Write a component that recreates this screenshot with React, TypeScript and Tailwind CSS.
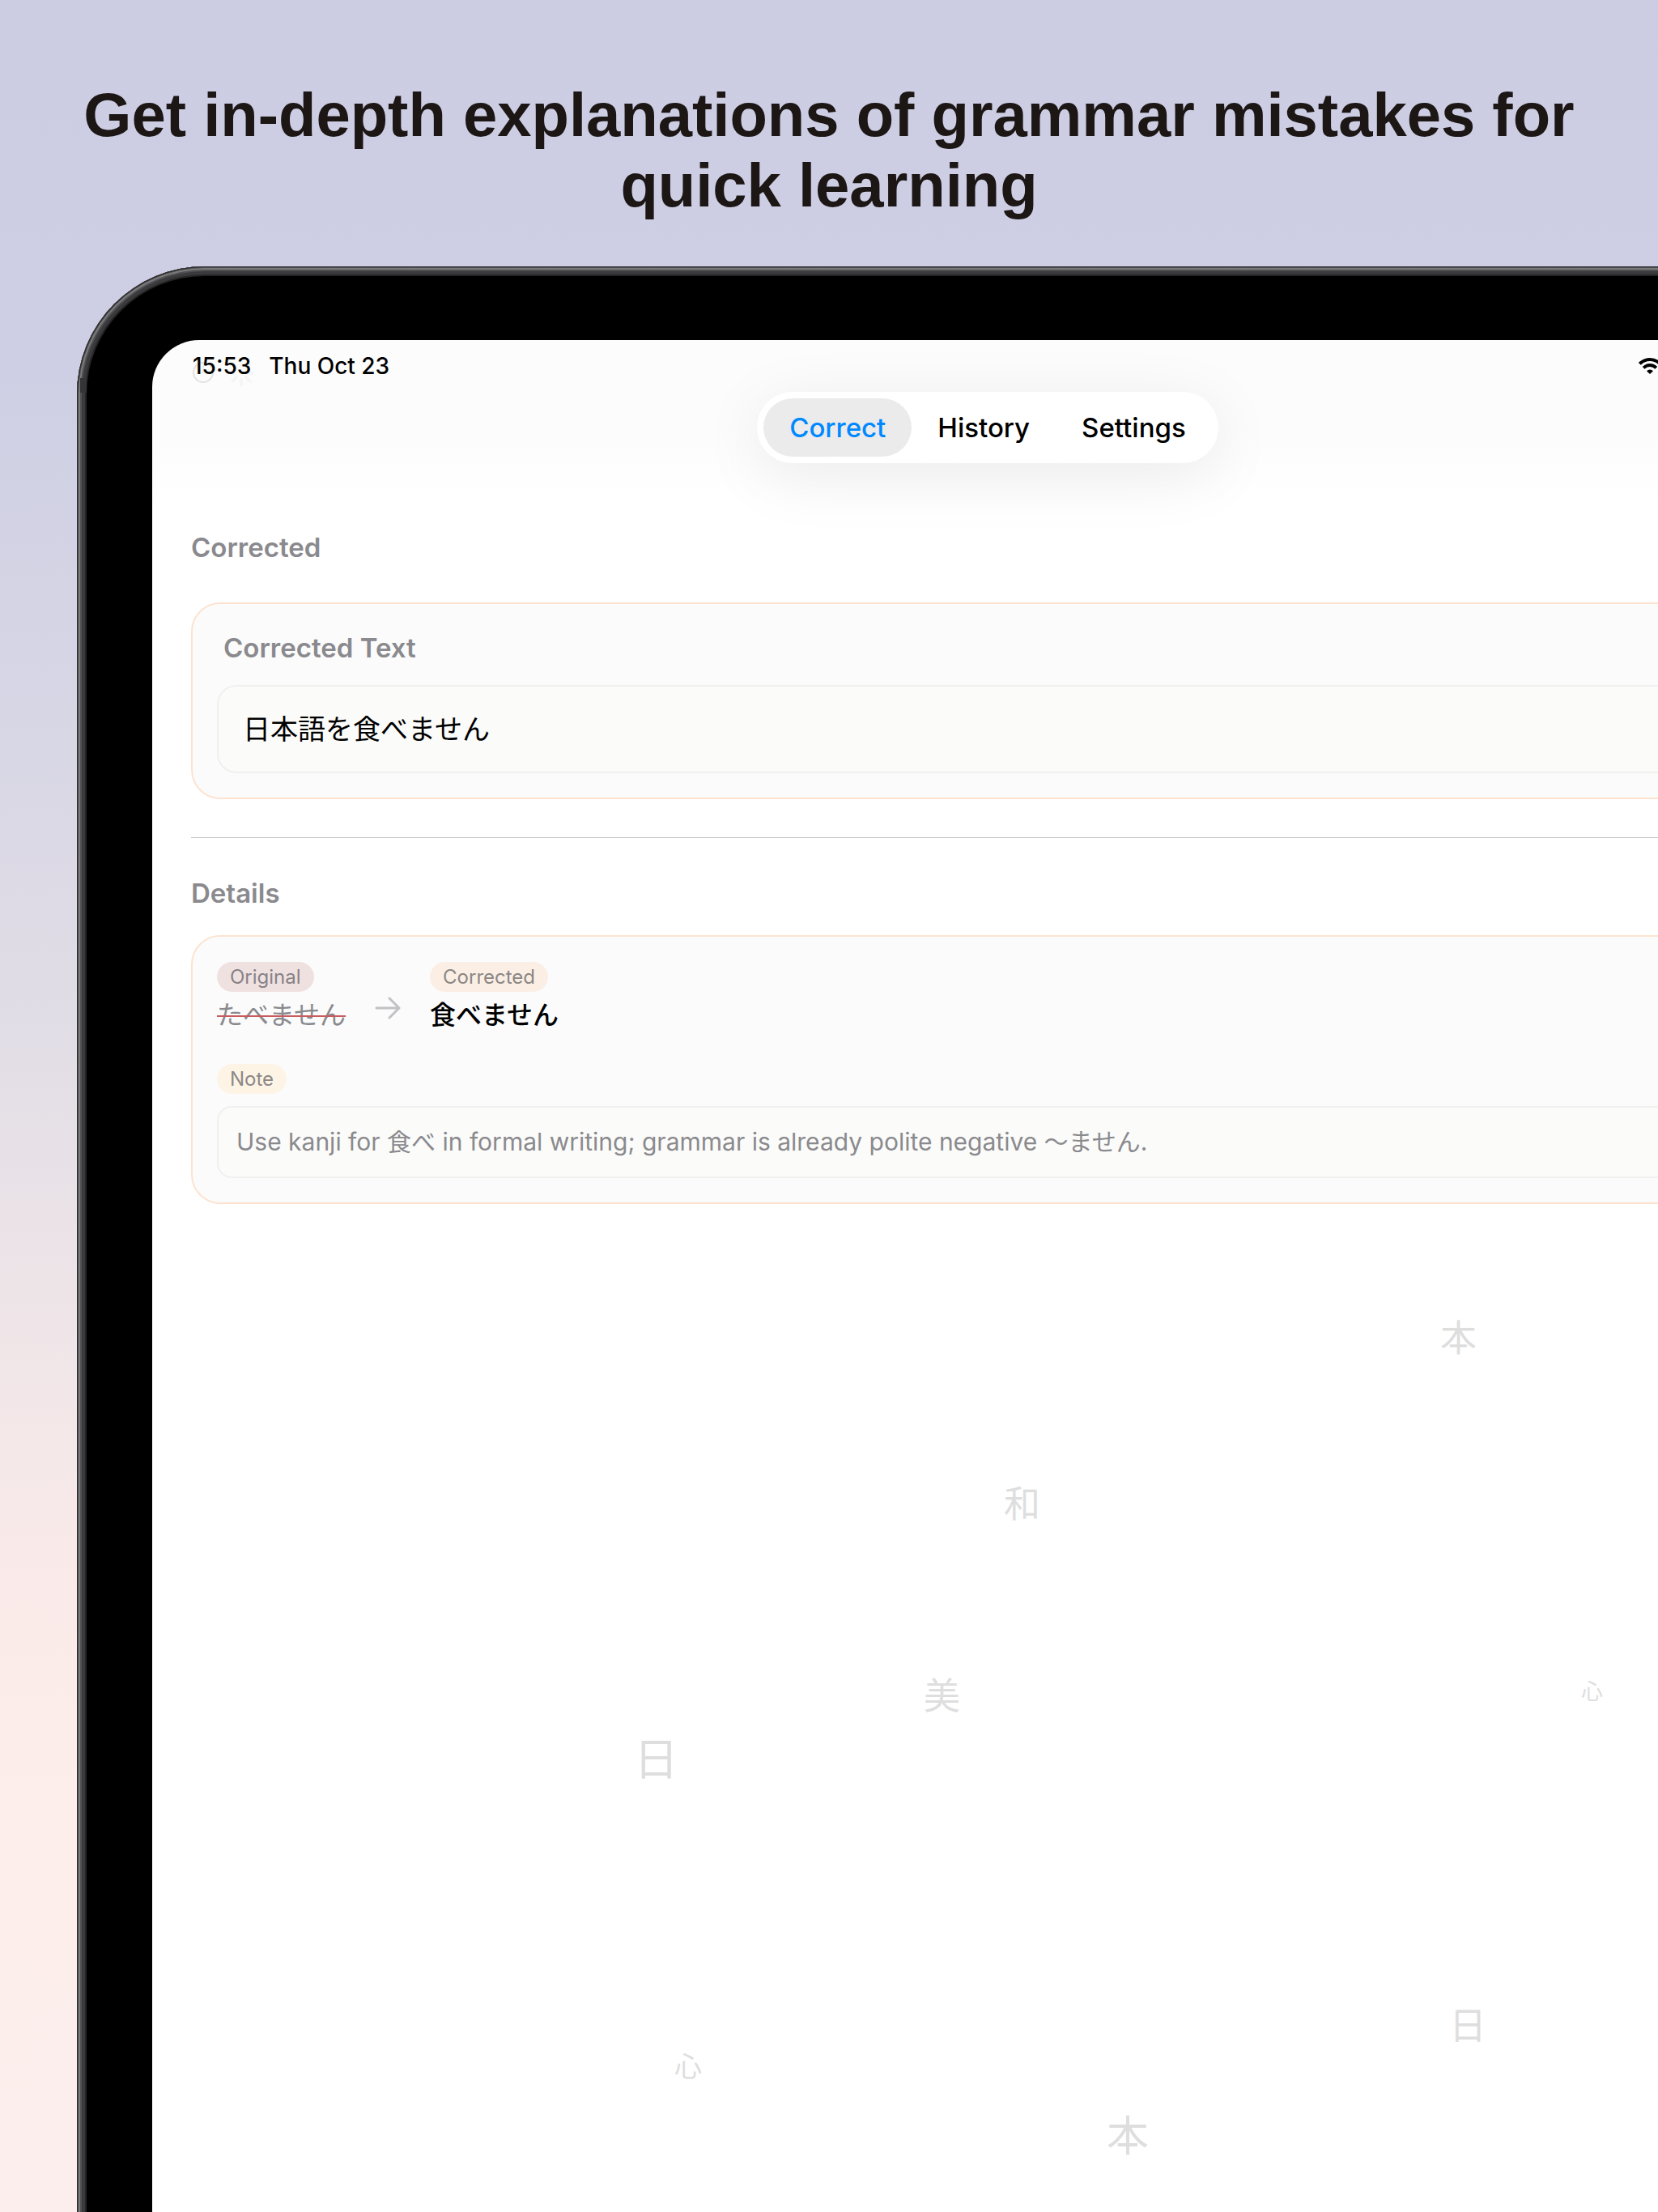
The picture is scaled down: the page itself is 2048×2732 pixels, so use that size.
import React from "react";

type Glyph = { char: string; className: string };

const glyphs: Glyph[] = [
  { char: "本", className: "left-[1591px] top-[1210px] text-[45px]" },
  { char: "和", className: "left-[1052px] top-[1415px] text-[45px]" },
  { char: "美", className: "left-[953px] top-[1652px] text-[45px]" },
  { char: "心", className: "left-[1765px] top-[1656px] text-[27px]" },
  { char: "日", className: "left-[595px] top-[1725px] text-[55px]" },
  { char: "日", className: "left-[1602px] top-[2058px] text-[46px]" },
  { char: "心", className: "left-[645px] top-[2116px] text-[34px]" },
  { char: "本", className: "left-[1179px] top-[2193px] text-[52px]" },
];

const tabs = ["Correct", "History", "Settings"];

function ToolbarShadow() {
  return (
    <svg
      className="absolute left-[46px] top-[20px]"
      width="88"
      height="40"
      viewBox="0 0 88 40"
      fill="none"
      strokeLinecap="round"
      aria-hidden="true"
    >
      <circle cx="17" cy="20" r="12" stroke="#e3e3e3" strokeWidth="2" />
      <path d="M17 12v8" stroke="#ececec" strokeWidth="2" />
      <g stroke="#f5f5f5" strokeWidth="4">
        <path d="M64 29v6M70 26l5 5M58 26l-5 5M73 21h4M51 21h4M70 15l4-4M58 15l-4-4M64 8v4" />
      </g>
    </svg>
  );
}

function WifiIcon() {
  return (
    <svg width="28" height="20" viewBox="0 0 28 20" fill="none" role="img" aria-label="Wi-Fi">
      <path d="M1.4 7.3a17.8 17.8 0 0 1 25.2 0" stroke="#000" strokeWidth="4" />
      <path d="M6.2 12.3a11 11 0 0 1 15.6 0" stroke="#000" strokeWidth="4" />
      <path d="M14 20l-4-3.8a5.8 5.8 0 0 1 8 0z" fill="#000" />
    </svg>
  );
}

function ArrowIcon() {
  return (
    <svg
      className="self-end"
      width="32"
      height="60"
      viewBox="0 0 32 60"
      fill="none"
      stroke="#c2c2c4"
      strokeWidth="3"
      strokeLinecap="round"
      strokeLinejoin="round"
      aria-hidden="true"
    >
      <path d="M2 30H30M18 18L30 30L18 42" />
    </svg>
  );
}

function Badge({ className, children }: { className: string; children: React.ReactNode }) {
  return (
    <span className={`w-fit rounded-full px-4 text-[24px] leading-[37px] ${className}`}>{children}</span>
  );
}

export default function App() {
  return (
    <div className="flex min-h-screen flex-col overflow-hidden bg-[linear-gradient(180deg,#cccde3_0%,#cecfe4_16%,#d7d6e5_32%,#e1dde6_46%,#efe5e8_60%,#f9eae9_70%,#fdeeeb_82%,#fbeeec_100%)] font-['Inter','Noto_Sans_CJK_JP',sans-serif]">
      <h1 className="px-20 pt-[98px] text-center font-['Liberation_Sans',sans-serif] text-[76px] leading-[87px] font-bold text-[#1c1615]">
        Get in-depth explanations of grammar mistakes for quick learning
      </h1>

      <div className="relative mt-[57px] -mb-4 ml-[95px] flex w-[calc(100%+202px)] flex-1 flex-col rounded-tl-[158px] bg-black px-[93px] pt-[91px] shadow-[inset_0_0_0_1px_#2b2b2d,inset_0_0_0_2px_#4c4c4e,inset_0_0_0_4px_#7a7a7c,inset_0_0_0_6px_#505052,inset_0_0_0_10px_#3a3a3c,inset_0_0_0_12px_#242426]">
        <span className="absolute top-[138px] left-1 h-[18px] w-2 bg-[#343436]" aria-hidden="true" />

        <div className="relative flex flex-1 flex-col rounded-tl-[58px] bg-[linear-gradient(180deg,#fcfcfc_0px,#fcfcfc_110px,#ffffff_200px)]">
          <ToolbarShadow />

          <div className="relative flex h-16 items-center pr-[200px] pl-[50px] text-[28px] leading-8 font-medium text-black">
            <time>15:53</time>
            <time className="ml-[22px]">Thu Oct 23</time>
            <span className="ml-auto">
              <WifiIcon />
            </span>
          </div>

          <nav className="flex self-center rounded-full bg-white p-2 text-[33px] leading-[72px] font-medium text-black shadow-[0_16px_80px_rgba(0,0,0,0.08)]">
            {tabs.map((tab, i) => (
              <button
                key={tab}
                type="button"
                aria-current={i === 0 ? "page" : undefined}
                className="rounded-full px-8 aria-[current=page]:bg-[#ebebeb] aria-[current=page]:text-[#0088ff]"
              >
                {tab}
              </button>
            ))}
          </nav>

          <main className="flex flex-col px-12 text-[#8a8a8e]">
            <section>
              <h2 className="mt-21 text-[33px] leading-10 font-semibold">Corrected</h2>
              <div className="mt-12 rounded-[36px] border-2 border-[#fde3cf] bg-[#fbfbfc] p-[30px]">
                <h3 className="mt-1 pl-2 text-[33px] leading-10 font-semibold">Corrected Text</h3>
                <p className="mt-[26px] rounded-3xl border-2 border-[#f0f0ef] bg-[#fbfbf9] px-[30px] py-8 text-[34px] leading-[41px] text-black">
                  日本語を食べません
                </p>
              </div>
            </section>

            <hr className="mt-[47px] border-t border-[#c6c6c8]" />

            <section>
              <h2 className="mt-12 text-[33px] leading-10 font-semibold">Details</h2>
              <div className="mt-8 flex flex-col rounded-[36px] border-2 border-[#fde3cf] bg-[#fbfbfc] px-[30px] pt-[31px] pb-[30px]">
                <div className="flex gap-9">
                  <div className="flex flex-col gap-2">
                    <Badge className="bg-[#f0e1e1] text-[#868287]">Original</Badge>
                    <del className="text-[32px] leading-[42px] decoration-[#c75b5e] decoration-2">たべません</del>
                  </div>
                  <ArrowIcon />
                  <div className="flex flex-col gap-2">
                    <Badge className="bg-[#fbeee4] text-[#8b8785]">Corrected</Badge>
                    <ins className="text-[32px] leading-[42px] font-medium text-black no-underline">食べません</ins>
                  </div>
                </div>
                <Badge className="mt-[39px] bg-[#fef4e6] text-[#8b8986]">Note</Badge>
                <p className="mt-[15px] rounded-[18px] border-2 border-[#f0f0ef] bg-[#fbfbf9] px-[22px] py-[22px] text-[30px] leading-[41px]">
                  Use kanji for 食べ in formal writing; grammar is already polite negative 〜ません.
                </p>
              </div>
            </section>
          </main>

          <div aria-hidden="true">
            {glyphs.map((g, i) => (
              <span key={i} className={`absolute leading-none text-[#dedede] ${g.className}`}>
                {g.char}
              </span>
            ))}
          </div>
        </div>
      </div>
    </div>
  );
}
